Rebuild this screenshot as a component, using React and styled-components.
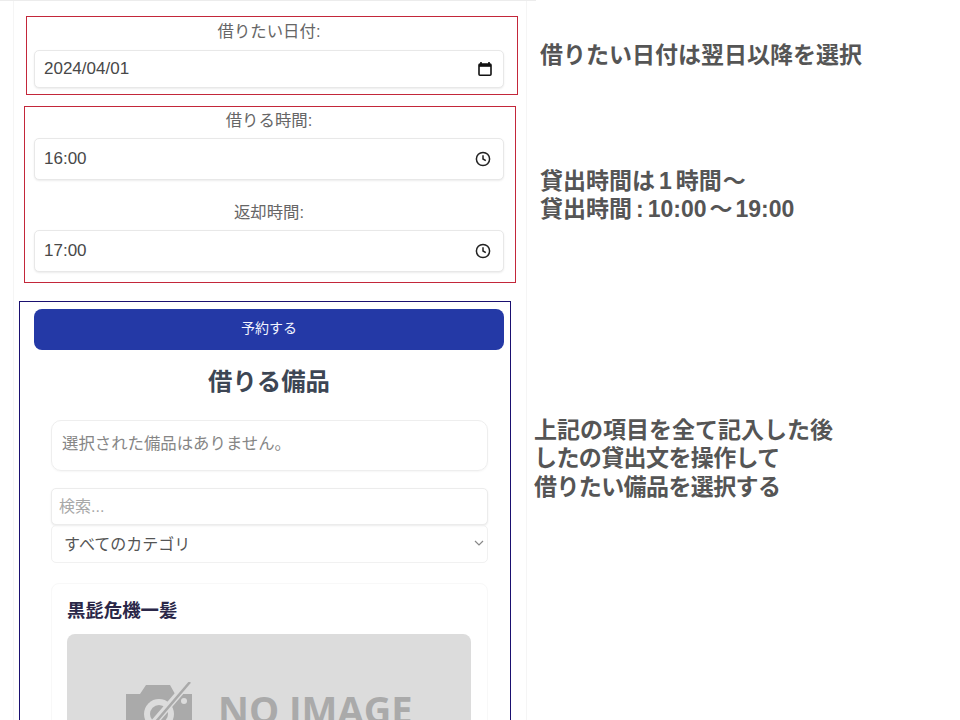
import React from "react";
import styled, { createGlobalStyle } from "styled-components";

const FONT = `"Liberation Sans", "Noto Sans CJK JP", sans-serif`;

const GlobalStyle = createGlobalStyle`
  html, body {
    margin: 0;
    height: 720px;
    overflow: hidden;
    background: #fff;
    font-family: ${FONT};
  }
`;

const CalendarIcon = () => (
  <svg width="16" height="16" viewBox="0 0 16 16">
    <path d="M4 1v2M12 1v2" stroke="#111" strokeWidth="1.6" />
    <rect x="2" y="3" width="12" height="11.2" rx="1" fill="none" stroke="#111" strokeWidth="1.6" />
    <rect x="2" y="3" width="12" height="2.8" fill="#111" />
  </svg>
);

const ClockIcon = () => (
  <svg width="16" height="16" viewBox="0 0 16 16" fill="none" stroke="#222" strokeWidth="1.5">
    <circle cx="8" cy="8" r="6.6" />
    <path d="M8 4.2V8l2.8 1.7" />
  </svg>
);

const Chevron = () => (
  <svg width="10" height="6" viewBox="0 0 10 6" fill="none" stroke="#888" strokeWidth="1.2">
    <path d="M1 1l4 4 4-4" />
  </svg>
);

const CameraOff = () => (
  <svg width="68" height="54" viewBox="0 0 68 54">
    <path d="M0 12h14l6-9h24l5 9h17v42H0z" fill="#aaa" />
    <circle cx="33" cy="32" r="15" fill="#dcdcdc" />
    <circle cx="33" cy="32" r="9" fill="#aaa" />
    <circle cx="58" cy="19" r="3" fill="#dcdcdc" />
    <path d="M63 0L20 50" stroke="#dcdcdc" strokeWidth="7" />
    <path d="M64 0L22 49" stroke="#aaa" strokeWidth="2.5" />
  </svg>
);

export default function App() {
  return (
    <>
      <GlobalStyle />
      <Page>
        <TopRule />
        <Content>
          <Column>
            <DateBox>
              <Label $height={32}>借りたい日付:</Label>
              <Field $height={38}>
                <Value>2024/04/01</Value>
                <IconSlot $right={10}>
                  <CalendarIcon />
                </IconSlot>
              </Field>
            </DateBox>
            <TimeBox>
              <Label $height={31}>借りる時間:</Label>
              <Field $height={42}>
                <Value>16:00</Value>
                <IconSlot $right={12}>
                  <ClockIcon />
                </IconSlot>
              </Field>
              <Label $height={31} $top={19}>返却時間:</Label>
              <Field $height={42}>
                <Value>17:00</Value>
                <IconSlot $right={12}>
                  <ClockIcon />
                </IconSlot>
              </Field>
            </TimeBox>
            <ItemBox>
              <Reserve>予約する</Reserve>
              <Title>借りる備品</Title>
              <ItemArea>
                <Selected>選択された備品はありません。</Selected>
                <Search placeholder="検索..." readOnly />
                <Category>
                  すべてのカテゴリ
                  <Chevron />
                </Category>
                <Card>
                  <CardTitle>黒髭危機一髪</CardTitle>
                  <NoImage>
                    <CameraOff />
                    <NoImageText>NO IMAGE</NoImageText>
                  </NoImage>
                </Card>
              </ItemArea>
            </ItemBox>
          </Column>
          <Notes>
            <Note $top={40} $left={5}>借りたい日付は翌日以降を選択</Note>
            <Note $top={97} $left={5}>
              貸出時間は<Spaced $gap={4}>1</Spaced>時間<Spaced $gap={1}>〜</Spaced>
              <br />
              貸出時間<Spaced $gap={4}>:</Spaced>10:00<Spaced $gap={3}>〜</Spaced>19:00
            </Note>
            <Note $top={192} $left={-1}>
              上記の項目を全て記入した後
              <br />
              <Tight>したの貸出文を操作して</Tight>
              <br />
              <Tight>借りたい備品を選択する</Tight>
            </Note>
          </Notes>
        </Content>
      </Page>
    </>
  );
}

const Page = styled.div`
  width: 960px;
  height: 720px;
  overflow: hidden;
`;

const TopRule = styled.div`
  width: 536px;
  height: 1px;
  background: #ececec;
`;

const Content = styled.div`
  display: flex;
  align-items: flex-start;
`;

const Column = styled.div`
  box-sizing: border-box;
  flex: 0 0 514px;
  height: 719px;
  margin-left: 13px;
  padding-top: 15px;
  border-left: 1px solid #f5f5f5;
  border-right: 1px solid #f5f5f5;
`;

const DateBox = styled.section`
  box-sizing: border-box;
  width: 492px;
  height: 79px;
  margin-left: 12px;
  padding: 1px 13px 0 7px;
  border: 1px solid #c3273a;
`;

const TimeBox = styled.section`
  box-sizing: border-box;
  width: 492px;
  height: 177px;
  margin: 11px 0 0 10px;
  padding: 0 11px 0 9px;
  border: 1px solid #c3273a;
`;

const ItemBox = styled.section`
  box-sizing: border-box;
  width: 492px;
  height: 600px;
  margin: 18px 0 0 5px;
  padding: 7px 6px 0 14px;
  border: 1px solid #1a1070;
`;

const Label = styled.div`
  height: ${(p) => p.$height}px;
  margin-top: ${(p) => p.$top || 0}px;
  font-size: 16.4px;
  line-height: 26px;
  text-align: center;
  color: #666;
`;

const Field = styled.div`
  display: flex;
  align-items: center;
  justify-content: space-between;
  box-sizing: border-box;
  height: ${(p) => p.$height}px;
  padding-left: 9px;
  border: 1px solid #e8e8e8;
  border-radius: 5px;
  box-shadow: 0 1px 2px rgba(0, 0, 0, 0.08);
  background: #fff;
`;

const Value = styled.span`
  font-size: 17px;
  color: #484848;
`;

const IconSlot = styled.span`
  display: flex;
  margin-right: ${(p) => p.$right}px;
`;

const Reserve = styled.div`
  height: 41px;
  border-radius: 8px;
  background: #2439a6;
  color: #f2f4ff;
  font-size: 14px;
  line-height: 39px;
  text-align: center;
`;

const Title = styled.h2`
  margin: 15px 0 0;
  height: 56px;
  font-size: 24.4px;
  line-height: 34px;
  font-weight: 700;
  text-align: center;
  color: #3d4654;
`;

const ItemArea = styled.div`
  padding: 0 16px 0 17px;
  margin-top: -1px;
`;

const Selected = styled.div`
  box-sizing: border-box;
  height: 51px;
  padding-left: 10px;
  border: 1px solid #eeeeee;
  border-radius: 10px;
  box-shadow: 0 1px 2px rgba(0, 0, 0, 0.04);
  font-size: 16.4px;
  line-height: 44px;
  color: #868686;
`;

const Search = styled.input`
  display: block;
  box-sizing: border-box;
  width: 100%;
  height: 37px;
  margin: 17px 0 0;
  padding: 0 7px;
  border: 1px solid #ececec;
  border-radius: 5px;
  box-shadow: 0 1px 2px rgba(0, 0, 0, 0.08);
  outline: none;
  font-family: ${FONT};
  font-size: 16px;

  &::placeholder {
    color: #a8a8a8;
    opacity: 1;
  }
`;

const Category = styled.div`
  display: flex;
  align-items: center;
  justify-content: space-between;
  box-sizing: border-box;
  height: 38px;
  padding: 0 3px 3px 12px;
  border: 1px solid #f1f1f1;
  border-radius: 5px;
  font-size: 16px;
  color: #555;
`;

const Card = styled.article`
  box-sizing: border-box;
  margin-top: 20px;
  padding: 15px 16px 0 15px;
  height: 300px;
  border: 1px solid #f8f8f8;
  border-radius: 8px;
`;

const CardTitle = styled.h3`
  margin: 0 0 11px;
  height: 24px;
  font-size: 18.4px;
  line-height: 24px;
  font-weight: 700;
  color: #2a2748;
`;

const NoImage = styled.div`
  display: flex;
  align-items: flex-start;
  gap: 24px;
  box-sizing: border-box;
  height: 250px;
  padding: 48px 0 0 59px;
  border-radius: 8px;
  background: #dcdcdc;
`;

const NoImageText = styled.span`
  margin-top: 4px;
  font-family: "Open Sans", sans-serif;
  font-size: 38px;
  line-height: 46px;
  font-weight: 700;
  white-space: nowrap;
  color: #aaa;
`;

const Notes = styled.aside`
  flex: 1;
  padding-left: 8px;
`;

const Note = styled.p`
  margin: ${(p) => p.$top}px 0 0 ${(p) => p.$left}px;
  font-size: 23px;
  line-height: 28.6px;
  font-weight: 700;
  white-space: nowrap;
  color: #555;
`;

const Spaced = styled.span`
  padding: 0 ${(p) => p.$gap}px;
`;

const Tight = styled.span`
  letter-spacing: -0.6px;
`;
